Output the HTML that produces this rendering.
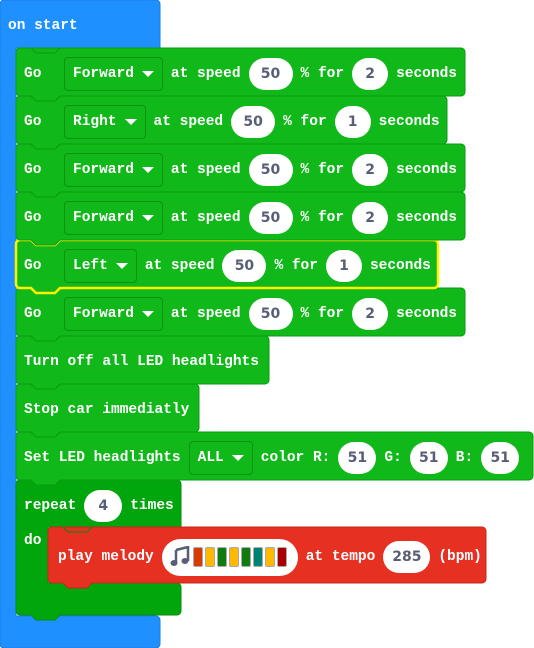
<!DOCTYPE html>
<html><head><meta charset="utf-8"><style>
*{margin:0;padding:0;box-sizing:border-box}
body{width:534px;height:648px;background:#fff;position:relative;overflow:hidden;font-family:"Liberation Mono",monospace;font-weight:bold;font-size:14.5px;color:#fff}
svg{position:absolute;left:0;top:0}
.row{position:absolute;display:flex;align-items:center;height:48px;gap:8px;white-space:nowrap;margin-top:2px}
.dd{border:1px solid #0a9412;border-radius:4px;height:34px;display:flex;align-items:center;padding:0 8px;gap:8px}
.dd i{width:0;height:0;border-left:6px solid transparent;border-right:6px solid transparent;border-top:6px solid #fff;display:inline-block}
.ov{background:#fff;color:#575e75;border-radius:16px;height:32px;display:flex;align-items:center;justify-content:center;font-family:"DejaVu Sans","Liberation Sans",sans-serif;font-size:14px;font-weight:bold}
.go{width:32px}
</style></head><body>
<svg width="534" height="648">
<path d="M0,4 a4,4 0 0 1 4,-4 H156 a4,4 0 0 1 4,4 V48 H16 V616 H156 a4,4 0 0 1 4,4 V644 a4,4 0 0 1 -4,4 H4 a4,4 0 0 1 -4,-4 Z" fill="#1e90ff" stroke="#1a7fe0" stroke-width="1"/>
<path d="M16,484 a4,4 0 0 1 4,-4 H177 a4,4 0 0 1 4,4 V527 H48 V583 H177 a4,4 0 0 1 4,4 V611 a4,4 0 0 1 -4,4 H60 l-5,5 h-19 l-5,-5 H20 a4,4 0 0 1 -4,-4 Z" fill="#00a60b" stroke="#008f09"/>
<path d="M48,531 a4,4 0 0 1 4,-4 H482 a4,4 0 0 1 4,4 V579 a4,4 0 0 1 -4,4 H92 l-5,5 h-19 l-5,-5 H52 a4,4 0 0 1 -4,-4 Z" fill="#e63022" stroke="#c4281c"/>
<path d="M63,527 l5,5 h19 l5,-5" fill="none" stroke="#008f09"/>
<g id="greens" fill="#10b819" stroke="#0b9b14" stroke-width="1"></g>
</svg>
<script>
var g=document.getElementById('greens');
var bl=[[432,533],[384,199],[336,269],[288,465],[240,438],[192,465],[144,465],[96,447],[48,465]];
var ns='http://www.w3.org/2000/svg';
bl.forEach(function(b){var y=b[0],w=b[1]-16,x=16;
var p=document.createElementNS(ns,'path');
p.setAttribute('d','M'+x+','+(y+4)+' a4,4 0 0 1 4,-4 H'+(x+w-4)+' a4,4 0 0 1 4,4 V'+(y+44)+' a4,4 0 0 1 -4,4 H'+(x+44)+' l-5,5 h-19 l-5,-5 H'+(x+4)+' a4,4 0 0 1 -4,-4 Z');
var q=document.createElementNS(ns,'path');
q.setAttribute('d','M'+(x+15)+','+y+' l5,5 h19 l5,-5');q.setAttribute('fill','none');
if(y==240){p.setAttribute('stroke','#fff200');p.setAttribute('stroke-width','2.5');q.setAttribute('stroke','#fff200');q.setAttribute('stroke-width','2.5');}
g.appendChild(p);g.appendChild(q);});
</script>
<div class="row" style="left:8px;top:0">on start</div>

<div class="row" style="left:24px;top:48px"><span class="go">Go</span><span class="dd">Forward<i></i></span><span>at speed</span><span class="ov" style="width:44px">50</span><span>% for</span><span class="ov" style="width:36px">2</span><span>seconds</span></div>
<div class="row" style="left:24px;top:96px"><span class="go">Go</span><span class="dd">Right<i></i></span><span>at speed</span><span class="ov" style="width:44px">50</span><span>% for</span><span class="ov" style="width:36px">1</span><span>seconds</span></div>
<div class="row" style="left:24px;top:144px"><span class="go">Go</span><span class="dd">Forward<i></i></span><span>at speed</span><span class="ov" style="width:44px">50</span><span>% for</span><span class="ov" style="width:36px">2</span><span>seconds</span></div>
<div class="row" style="left:24px;top:192px"><span class="go">Go</span><span class="dd">Forward<i></i></span><span>at speed</span><span class="ov" style="width:44px">50</span><span>% for</span><span class="ov" style="width:36px">2</span><span>seconds</span></div>
<div class="row" style="left:24px;top:240px"><span class="go">Go</span><span class="dd">Left<i></i></span><span>at speed</span><span class="ov" style="width:44px">50</span><span>% for</span><span class="ov" style="width:36px">1</span><span>seconds</span></div>
<div class="row" style="left:24px;top:288px"><span class="go">Go</span><span class="dd">Forward<i></i></span><span>at speed</span><span class="ov" style="width:44px">50</span><span>% for</span><span class="ov" style="width:36px">2</span><span>seconds</span></div>
<div class="row" style="left:24px;top:336px">Turn off all LED headlights</div>
<div class="row" style="left:24px;top:384px">Stop car immediatly</div>
<div class="row" style="left:24px;top:432px"><span>Set LED headlights</span><span class="dd">ALL<i></i></span><span>color R:</span><span class="ov" style="width:38px">51</span><span>G:</span><span class="ov" style="width:38px">51</span><span>B:</span><span class="ov" style="width:38px">51</span></div>
<div class="row" style="left:24px;top:480px"><span>repeat</span><span class="ov" style="width:38px">4</span><span>times</span></div>
<div class="row" style="left:24px;top:515px;height:48px">do</div>
<div class="row" style="left:58px;top:531px"><span>play melody</span>
<span class="ov" style="width:136px;height:37px;border-radius:19px;justify-content:flex-start;padding-left:7px;gap:2px">
<svg style="position:static" width="22" height="22" viewBox="0 0 22 22"><path d="M7,4 L19,1 V15" stroke="#575e75" stroke-width="2.5" fill="none"/><ellipse cx="5" cy="17" rx="3.5" ry="3" fill="#575e75"/><ellipse cx="16" cy="15" rx="3.5" ry="3" fill="#575e75"/><path d="M7,4 V17" stroke="#575e75" stroke-width="2.5"/></svg>
<span style="display:flex;gap:2px">
<b style="width:10px;height:20px;background:#d83b01;border:1px solid #aaa;border-radius:2px"></b>
<b style="width:10px;height:20px;background:#ffb900;border:1px solid #aaa;border-radius:2px"></b>
<b style="width:10px;height:20px;background:#107c10;border:1px solid #aaa;border-radius:2px"></b>
<b style="width:10px;height:20px;background:#ffb900;border:1px solid #aaa;border-radius:2px"></b>
<b style="width:10px;height:20px;background:#107c10;border:1px solid #aaa;border-radius:2px"></b>
<b style="width:10px;height:20px;background:#008272;border:1px solid #aaa;border-radius:2px"></b>
<b style="width:10px;height:20px;background:#ffb900;border:1px solid #aaa;border-radius:2px"></b>
<b style="width:10px;height:20px;background:#a80000;border:1px solid #aaa;border-radius:2px"></b>
</span></span>
<span>at tempo</span><span class="ov" style="width:47px">285</span><span>(bpm)</span></div>
</body></html>
